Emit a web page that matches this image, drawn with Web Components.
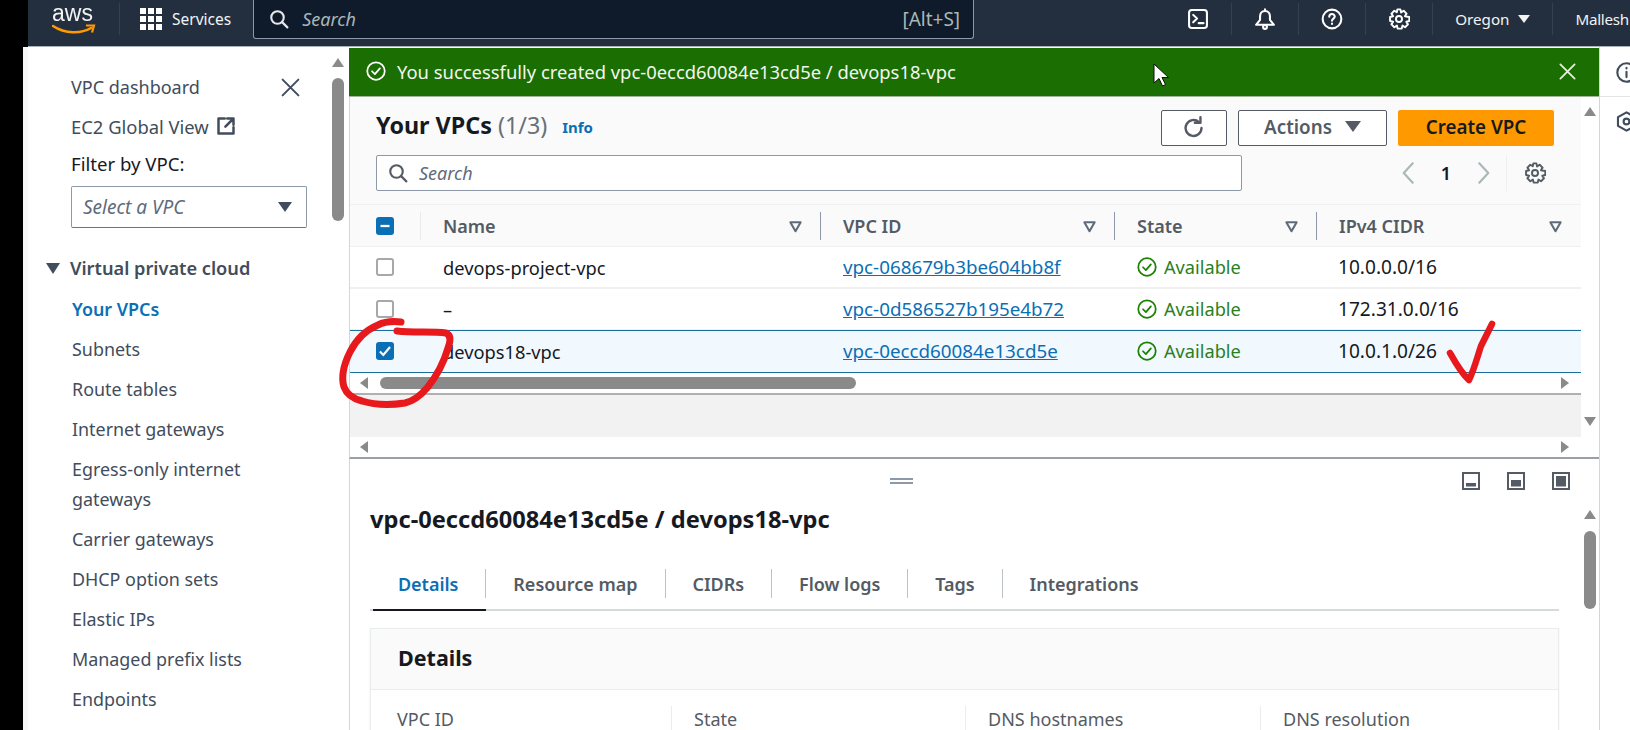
<!DOCTYPE html>
<html lang="en">
<head>
<meta charset="utf-8">
<title>Your VPCs</title>
<style>
  html, body { margin: 0; height: 730px; overflow: hidden; background: #000; }
  body { font-family: "Noto Sans", "Open Sans", sans-serif; font-size: 18px; color: #16191f; }
</style>
</head>
<body>
<app-shell>
  <aws-topbar slot="top"></aws-topbar>
  <vpc-sidebar slot="nav">
    <nav-link>Your VPCs</nav-link>
    <nav-link>Subnets</nav-link>
    <nav-link>Route tables</nav-link>
    <nav-link>Internet gateways</nav-link>
    <nav-link>Egress-only internet gateways</nav-link>
    <nav-link>Carrier gateways</nav-link>
    <nav-link>DHCP option sets</nav-link>
    <nav-link>Elastic IPs</nav-link>
    <nav-link>Managed prefix lists</nav-link>
    <nav-link>Endpoints</nav-link>
  </vpc-sidebar>
  <flash-banner slot="main">You successfully created vpc-0eccd60084e13cd5e / devops18-vpc</flash-banner>
  <vpc-pane slot="main">
    <vpc-row name="devops-project-vpc" vpc="vpc-068679b3be604bb8f" cidr="10.0.0.0/16"></vpc-row>
    <vpc-row name="–" vpc="vpc-0d586527b195e4b72" cidr="172.31.0.0/16"></vpc-row>
    <vpc-row name="devops18-vpc" vpc="vpc-0eccd60084e13cd5e" cidr="10.0.1.0/26" selected></vpc-row>
  </vpc-pane>
  <details-pane slot="main"></details-pane>
  <help-rail slot="rail"></help-rail>
</app-shell>
<ink-marks></ink-marks>

<script>
// Shared icon markup, everything on a 16 unit grid
const GEAR = `<path d="M6.8 1 6.4 3.1 4.6 2 2.5 4.1 3.7 6 1.5 6.5v3l2.2.5-1.2 1.9L4.6 14l1.9-1.2.5 2.2h3l.5-2.2 1.9 1.2 2.1-2.1-1.2-1.9 2.2-.5v-3L12.3 6l1.2-1.9L11.4 2 9.5 3.2 9 1z"/><circle cx="8" cy="8" r="2.2"/>`;
const SEARCH = `<circle cx="6.8" cy="6.8" r="5"/><path d="m10.5 10.5 4.2 4.2"/>`;
const CHECK_CIRCLE = `<circle cx="8" cy="8" r="7"/><path d="m4.8 8.2 2.3 2.3 4-4.6"/>`;
const COLUMNS = "71px 400px 294px 202px 264px";
const icon = (body, size, color, width = 2) =>
  `<svg width="${size}" height="${size}" viewBox="0 0 16 16" fill="none" stroke="${color}" stroke-width="${width}" stroke-linejoin="round" stroke-linecap="round" aria-hidden="true">${body}</svg>`;

class AppShell extends HTMLElement {
  constructor() {
    super();
    this.attachShadow({ mode: "open" }).innerHTML = `
      <style>
        :host { display: grid; grid-template-columns: 326px 1251px 30px; grid-template-rows: 47px 683px; width: 1607px; margin-left: 23px; filter: blur(.3px); }
        .top { grid-column: 1 / -1; padding-left: 5px; background: #000; }
        .main { display: flex; flex-direction: column; padding-top: 1px; background: #fff; border-right: 1px solid #d5d5d5; box-sizing: border-box; overflow: hidden; }
      </style>
      <div class="top"><slot name="top"></slot></div>
      <slot name="nav"></slot>
      <div class="main"><slot name="main"></slot></div>
      <slot name="rail"></slot>`;
  }
}

class AwsTopbar extends HTMLElement {
  constructor() {
    super();
    const divider = (x) => `<i class="div" style="margin-left:${x}px"></i>`;
    this.attachShadow({ mode: "open" }).innerHTML = `
      <style>
        :host { display: flex; align-items: center; height: 47px; padding-bottom: 8px; box-sizing: border-box; background: #232f3e; border-bottom: 1px solid #aab2b8; color: #f2f3f3; font-size: 15.2px; overflow: hidden; white-space: nowrap; }
        .logo { position: relative; align-self: flex-start; width: 50px; height: 38px; margin-left: 24px; flex: none; }
        .logo b { display: block; font-family: "Liberation Sans", sans-serif; font-weight: 400; font-size: 23px; line-height: 26px; }
        .logo svg { position: absolute; left: 0; top: 24px; }
        .div { flex: none; width: 1px; height: 32px; background: #35414f; }
        .grid { flex: none; display: grid; grid-template-columns: repeat(3, 6px); gap: 2px; margin-left: 20px; }
        .grid i { width: 6px; height: 6px; background: #fff; }
        .services { margin-left: 10px; font-size: 15.5px; }
        .search { flex: none; align-self: flex-start; display: flex; align-items: center; width: 721px; height: 40px; margin: -1px 0 0 22px; padding: 0 13px 0 15px; box-sizing: border-box; background: #0f1b2a; border: 1px solid #8d99a8; border-top: 0; border-radius: 0 0 3px 3px; color: #aab7b8; }
        .search em { margin-left: 13px; font-size: 18px; }
        .search span { margin-left: auto; font-size: 19px; }
        .tool { flex: none; display: flex; justify-content: center; width: 66px; }
        .caret { width: 0; height: 0; margin-left: 9px; border: 6px solid transparent; border-top: 8px solid #f2f3f3; border-bottom: 0; }
      </style>
      <div class="logo"><b>aws</b><svg width="44" height="11" viewBox="0 0 44 11" fill="none"><path d="M1 2c12 8 28 8 38 2" stroke="#f90" stroke-width="2.6" stroke-linecap="round"/><path d="M34 1.5h8l-2 7" stroke="#f90" stroke-width="2.2" fill="none"/></svg></div>
      ${divider(17)}
      <div class="grid">${"<i></i>".repeat(9)}</div>
      <span class="services">Services</span>
      <div class="search">${icon(SEARCH, 20, "#e6e8ea", 1.7)}<em>Search</em><span>[Alt+S]</span></div>
      <div style="flex:none;width:191px"></div>
      <div class="tool">${icon(`<rect x="1.5" y="1.5" width="13" height="13" rx="2"/><path d="m4.5 5 2.8 2.7-2.8 2.7M8.5 11H12"/>`, 22, "#fff", 1.5)}</div>
      ${divider(0)}
      <div class="tool">${icon(`<path d="M8 2.200c-2.500 0-3.600 2-3.600 4v2.400L1.500 12.200h13L11.600 8.600V6.200c0-2-1.100-4-3.600-4zM8 1v1.200"/><circle cx="8" cy="13.800" r="1.400"/>`, 22, "#fff", 1.5)}</div>
      ${divider(0)}
      <div class="tool">${icon(`<circle cx="8" cy="8" r="6.800"/><path d="M6 6.300c0-1.200 1-2 2-2s2 .8 2 1.900c0 1.500-2 1.600-2 3.100M8 11.300v.4"/>`, 22, "#fff", 1.5)}</div>
      ${divider(0)}
      <div class="tool">${icon(GEAR, 22, "#fff", 1.4)}</div>
      ${divider(0)}
      <span style="margin-left:22px">Oregon</span><i class="caret"></i>
      ${divider(22)}
      <span style="margin-left:22px;letter-spacing:-.3px">Mallesh</span>`;
  }
}

class VpcSidebar extends HTMLElement {
  constructor() {
    super();
    this.attachShadow({ mode: "open" }).innerHTML = `
      <style>
        :host { display: flex; background: #fff; border-left: 5px solid #f8f8f8; box-sizing: border-box; color: #414d5c; height: 683px; overflow: hidden; }
        .body { flex: none; width: 304px; padding: 25px 0 0 43px; box-sizing: border-box; }
        .row { display: flex; align-items: center; height: 30px; margin-bottom: 9px; white-space: nowrap; }
        .close { margin-left: auto; margin-right: 31px; display: flex; }
        .label { height: 28px; margin: -1px 0 9px; color: #16191f; font-size: 18.6px; }
        .select { display: flex; align-items: center; justify-content: space-between; width: 236px; height: 42px; padding: 0 14px 0 11px; box-sizing: border-box; border: 1px solid #8d99a8; border-bottom-color: #6b7480; border-radius: 2px; color: #5f6b7a; margin-bottom: 25px; }
        .select em { font-size: 19px; }
        .select i { width: 0; height: 0; border: 7px solid transparent; border-top: 10px solid #414d5c; border-bottom: 0; }
        .group { display: flex; align-items: center; height: 30px; margin: 0 0 11px -25px; font-weight: 600; white-space: nowrap; font-size: 18.2px; }
        .group i { width: 0; height: 0; margin-right: 10px; border: 7px solid transparent; border-top: 11px solid #414d5c; border-bottom: 0; }
        .bar { flex: none; width: 12px; display: flex; flex-direction: column; align-items: center; padding-top: 11px; }
        .bar i { width: 0; height: 0; border: 6px solid transparent; border-bottom: 9px solid #8a8a8a; border-top: 0; }
        .bar b { display: block; width: 12px; height: 143px; margin-top: 11px; border-radius: 6px; background: #8a8a8a; }
      </style>
      <div class="body">
        <div class="row">VPC dashboard<span class="close">${icon(`<path d="m2 2 12 12M14 2 2 14"/>`, 21, "#414d5c", 1.5)}</span></div>
        <div class="row"><span style="font-size:18.4px">EC2 Global View</span><span style="display:flex;margin-left:7px">${icon(`<path d="M7 2H2v12h12V9M9 2h5v5M14 2 7.500 8.500"/>`, 20, "#414d5c", 2)}</span></div>
        <div class="row label">Filter by VPC:</div>
        <div class="select"><em>Select a VPC</em><i></i></div>
        <div class="group"><i></i>Virtual private cloud</div>
        <slot></slot>
      </div>
      <div class="bar"><i></i><b></b></div>`;
  }
}

class NavLink extends HTMLElement {
  constructor() {
    super();
    this.attachShadow({ mode: "open" }).innerHTML = `
      <style>
        :host { display: block; width: 230px; line-height: 30px; margin: 0 0 10px 1px; color: #414d5c; font-size: 17.9px; }
        :host(:first-child) { color: #0b6fb5; font-weight: 600; }
      </style>
      <slot></slot>`;
  }
}

class FlashBanner extends HTMLElement {
  constructor() {
    super();
    this.attachShadow({ mode: "open" }).innerHTML = `
      <style>
        :host { display: flex; flex: none; align-items: center; height: 49px; background: #1b6e01; color: #f2f6ef; padding: 0 22px 2px 17px; box-sizing: border-box; border-bottom: 1px solid #9fb796; font-size: 18.4px; white-space: nowrap; }
        span { margin-left: 11px; }
        .x { margin-left: auto; display: flex; }
      </style>
      ${icon(CHECK_CIRCLE, 20, "#fff", 1.4)}
      <span><slot></slot></span>
      <div class="x">${icon(`<path d="m2 2 12 12M14 2 2 14"/>`, 19, "#e4efe0", 1.5)}</div>`;
  }
}

class VpcCheck extends HTMLElement {
  constructor() {
    super();
    const state = this.getAttribute("state");
    const mark = state === "checked" ? `<path d="m3.500 8.500 3 3 6-7" stroke="#fff" stroke-width="2" fill="none"/>`
      : state === "mixed" ? `<path d="M4 8h8" stroke="#fff" stroke-width="2"/>` : "";
    this.attachShadow({ mode: "open" }).innerHTML = `
      <style>
        :host { display: block; width: 18px; height: 18px; box-sizing: border-box; border-radius: 3px; background: ${state ? "#0b6fb5" : "#fff"}; border: ${state ? 0 : "2px solid #a8a8a8"}; }
        svg { display: block; }
      </style>
      ${state ? `<svg width="18" height="18" viewBox="0 0 16 16">${mark}</svg>` : ""}`;
  }
}

class VpcRow extends HTMLElement {
  constructor() {
    super();
    const name = this.getAttribute("name");
    const vpc = this.getAttribute("vpc");
    const cidr = this.getAttribute("cidr");
    const selected = this.hasAttribute("selected");
    this.attachShadow({ mode: "open" }).innerHTML = `
      <style>
        :host { display: grid; grid-template-columns: ${COLUMNS}; align-items: center; height: 42px; box-sizing: border-box; border-bottom: 2px solid #f0f0f0; background: #fff; white-space: nowrap; }
        :host([selected]) { background: #f1f8fe; border-top: 1px solid #1a6f9e; border-bottom: 1px solid #1a6f9e; margin-top: -1px; height: 43px; padding-bottom: 1px; }
        .c { padding-left: 22px; }
        .box { padding-left: 26px; }
        .name { font-size: 18.3px; }
        a { color: #0b6fb5; text-decoration: underline; font-size: 18.8px; }
        .ok { display: flex; align-items: center; gap: 7px; color: #2a7f1e; font-size: 18.2px; }
        .cidr { font-size: 19.1px; padding-left: 21px; }
      </style>
      <div class="c box"><vpc-check ${selected ? 'state="checked"' : ""}></vpc-check></div>
      <div class="c name">${name}</div>
      <div class="c"><a>${vpc}</a></div>
      <div class="c ok">${icon(CHECK_CIRCLE, 20, "#1d8102", 1.4)}Available</div>
      <div class="c cidr">${cidr}</div>`;
  }
}

class VpcPane extends HTMLElement {
  constructor() {
    super();
    const col = (label, line) => `
      <div class="th ${line ? "line" : ""}"><span>${label}</span>${icon(`<path d="M2.500 3.500h11L8 13z"/>`, 15, "#5f6b7a", 2.2)}</div>`;
    const hbar = (thumb) => `
      <div class="hbar"><i class="l"></i>${thumb ? '<b></b>' : ""}<i class="r"></i></div>`;
    this.attachShadow({ mode: "open" }).innerHTML = `
      <style>
        :host { display: flex; flex: none; height: 362px; box-sizing: border-box; border-left: 1px solid #d5d5d5; border-bottom: 2px solid #9aa0a6; }
        .content { flex: none; width: 1231px; }
        .head { height: 108px; padding: 13px 27px 0 26px; box-sizing: border-box; background: #fafafa; border-bottom: 1px solid #f0f0f0; }
        .title { display: flex; align-items: center; height: 36px; }
        h1 { margin: -6px 0 0; font-size: 23.300px; font-weight: 700; }
        h1 span { font-weight: 400; color: #687078; }
        .info { margin: -2px 0 0 15px; font-size: 15px; font-weight: 700; color: #0b6fb5; }
        .btn { display: flex; align-items: center; justify-content: center; height: 36px; box-sizing: border-box; border: 1px solid #545b64; border-radius: 2px; background: #fff; color: #545b64; font-weight: 600; font-size: 18.800px; padding-bottom: 3px; }
        .refresh { width: 66px; margin-left: auto; padding: 0; }
        .actions { width: 149px; margin-left: 11px; gap: 13px; }
        .actions i { width: 0; height: 0; border: 8px solid transparent; border-top: 11px solid #545b64; border-bottom: 0; }
        .create { width: 156px; margin-left: 11px; background: #ff9900; border-color: #ff9900; color: #16191f; }
        .tools { display: flex; align-items: center; height: 36px; margin-top: 9px; }
        .search { flex: none; display: flex; align-items: center; width: 866px; height: 36px; box-sizing: border-box; padding-left: 11px; border: 1px solid #8d99a8; border-radius: 2px; background: #fff; color: #5f6b7a; }
        .search em { margin-left: 11px; }
        .pager { display: flex; align-items: center; margin-left: auto; }
        .pager b { width: 50px; margin: 0; text-align: center; font-weight: 600; }
        .th { display: flex; align-items: center; justify-content: space-between; height: 42px; padding: 0 18px 0 22px; box-sizing: border-box; font-weight: 600; color: #545b64; position: relative; white-space: nowrap; }
        .line::after { content: ""; position: absolute; right: 0; top: 7px; bottom: 7px; width: 1px; background: #8d99a8; }
        .thead { display: grid; grid-template-columns: ${COLUMNS}; background: #fafafa; border-bottom: 1px solid #f0f0f0; box-sizing: border-box; height: 42px; }
        .thead .chk { display: flex; align-items: center; padding-left: 26px; position: relative; }
        .thead .chk::after { content: ""; position: absolute; right: 0; top: 7px; bottom: 7px; width: 1px; background: #eaeaea; }
        .hbar { display: flex; align-items: center; height: 20px; background: #fff; position: relative; }
        .hbar i { width: 0; height: 0; border: 6px solid transparent; }
        .hbar .l { margin-left: 10px; border-right: 8px solid #8a8a8a; border-left: 0; }
        .hbar .r { margin-left: auto; margin-right: 12px; border-left: 8px solid #8a8a8a; border-right: 0; }
        .hbar b { width: 476px; height: 12px; margin-left: 12px; border-radius: 6px; background: #8a8a8a; }
        .rule { height: 2px; background: #b0b0b0; }
        .fill { height: 42px; background: #f2f2f2; }
        .vbar { flex: 1; display: flex; flex-direction: column; align-items: center; justify-content: space-between; padding: 10px 0 31px; box-sizing: border-box; background: #fff; }
        .vbar i { width: 0; height: 0; border: 6px solid transparent; }
        .up { border-bottom: 9px solid #8a8a8a !important; border-top: 0 !important; }
        .down { border-top: 9px solid #8a8a8a !important; border-bottom: 0 !important; }
      </style>
      <div class="content">
        <div class="head">
          <div class="title">
            <h1>Your VPCs <span>(1/3)</span></h1><span class="info">Info</span>
            <div class="btn refresh">${icon(`<path d="M13 8a5.300 5.300 0 1 1-1.700-3.900"/><path d="M12.300 .8v3.700H8.600"/>`, 24, "#545b64", 1.600)}</div>
            <div class="btn actions">Actions<i></i></div>
            <div class="btn create">Create VPC</div>
          </div>
          <div class="tools">
            <div class="search">${icon(SEARCH, 20, "#545b64", 1.700)}<em>Search</em></div>
            <div class="pager">
              ${icon(`<path d="M10.500 1.500 4.500 8l6 6.500"/>`, 24, "#aab7b8", 1.400)}
              <b>1</b>
              ${icon(`<path d="m5.500 1.500 6 6.500-6 6.500"/>`, 24, "#aab7b8", 1.400)}
              <i style="width:1px;height:36px;background:#f0f0f0;margin:0 17px 0 11px"></i>
              ${icon(GEAR, 22, "#545b64", 1.400)}
              <i style="width:8px"></i>
            </div>
          </div>
        </div>
        <div class="thead">
          <div class="chk"><vpc-check state="mixed"></vpc-check></div>
          ${col("Name", true)}${col("VPC ID", true)}${col("State", true)}${col("IPv4 CIDR", false)}
        </div>
        <slot></slot>
        ${hbar(true)}
        <div class="rule"></div>
        <div class="fill"></div>
        ${hbar(false)}
      </div>
      <div class="vbar"><i class="up"></i><i class="down"></i></div>`;
  }
}

class DetailsPane extends HTMLElement {
  constructor() {
    super();
    const tabs = ["Details", "Resource map", "CIDRs", "Flow logs", "Tags", "Integrations"];
    const size = (body) => `<svg width="18" height="18" viewBox="0 0 18 18"><rect x="1" y="1" width="16" height="16" fill="none" stroke="#545b64" stroke-width="2"/>${body}</svg>`;
    this.attachShadow({ mode: "open" }).innerHTML = `
      <style>
        :host { display: flex; flex: 1; min-height: 0; border-left: 1px solid #d5d5d5; overflow: hidden; }
        .content { flex: none; width: 1189px; margin-left: 20px; }
        .top { display: flex; align-items: center; height: 42px; margin-right: -11px; }
        .handle { width: 23px; height: 6px; margin: 2px 0 0 520px; box-sizing: border-box; border-top: 2px solid #8d99a8; border-bottom: 2px solid #8d99a8; }
        .sizes { display: flex; gap: 27px; margin: 2px 0 0 auto; }
        h2 { margin: 0; font-size: 23.650px; line-height: 36px; font-weight: 700; white-space: nowrap; }
        .tabs { display: flex; height: 48px; margin-top: 24px; padding-left: 1px; border-bottom: 2px solid #d5dbdb; }
        .tab { display: flex; align-items: center; height: 29px; margin-top: 8px; padding: 0 26.900px; box-sizing: border-box; font-weight: 600; color: #545b64; border-right: 1px solid #bcc2c6; position: relative; white-space: nowrap; font-size: 18px; }
        .tab:last-child { border: 0; }
        .tab.on { color: #0b6fb5; }
        .tab.on::after { content: ""; position: absolute; left: 2px; right: -1px; bottom: -13px; height: 2px; background: #16191f; }
        .card { margin-top: 17px; border: 1px solid #eaeded; box-shadow: 0 1px 2px rgba(0, 0, 0, .08); }
        .card h3 { margin: 0; height: 61px; padding-left: 27px; font-size: 21.500px; line-height: 57px; background: #fafafa; border-bottom: 1px solid #eaeded; box-sizing: border-box; }
        .cols { display: grid; grid-template-columns: 300px 294px 295px 1fr; padding-top: 16px; }
        .cols div { height: 24px; line-height: 26px; color: #545b64; padding-left: 22px; border-left: 1px solid #eaeded; white-space: nowrap; }
        .cols div:first-child { border: 0; padding-left: 26px; }
        .vbar { flex: 1; display: flex; flex-direction: column; align-items: center; padding-top: 51px; margin-left: 25px; margin-right: 3px; }
        .vbar i { width: 0; height: 0; border: 6px solid transparent; border-bottom: 9px solid #8a8a8a; border-top: 0; }
        .vbar b { display: block; width: 12px; height: 78px; margin-top: 12px; border-radius: 6px; background: #8a8a8a; }
      </style>
      <div class="content">
        <div class="top">
          <i class="handle"></i>
          <div class="sizes">
            ${size(`<rect x="4" y="11" width="10" height="3.500" fill="#545b64"/>`)}
            ${size(`<rect x="4" y="8" width="10" height="6.500" fill="#545b64"/>`)}
            ${size(`<rect x="4" y="4" width="10" height="10.500" fill="#545b64"/>`)}
          </div>
        </div>
        <h2>vpc-0eccd60084e13cd5e / devops18-vpc</h2>
        <div class="tabs">${tabs.map((t, i) => `<div class="tab ${i === 0 ? "on" : ""}">${t}</div>`).join("")}</div>
        <div class="card">
          <h3>Details</h3>
          <div class="cols"><div>VPC ID</div><div>State</div><div>DNS hostnames</div><div>DNS resolution</div></div>
        </div>
      </div>
      <div class="vbar"><i></i><b></b></div>`;
  }
}

class HelpRail extends HTMLElement {
  constructor() {
    super();
    this.attachShadow({ mode: "open" }).innerHTML = `
      <style>
        :host { display: block; background: #fff; overflow: hidden; padding-top: 1px; }
        .cell { height: 49px; display: flex; align-items: center; padding-left: 16px; box-sizing: border-box; border-bottom: 1px solid #e4e4e4; }
        .cell + .cell { border: 0; }
        svg { flex: none; }
      </style>
      <div class="cell">${icon(`<circle cx="8" cy="8" r="7"/><path d="M8 7.500v4M8 4.500v.4"/>`, 21, "#414d5c", 1.600)}</div>
      <div class="cell">${icon(`<path d="M8 1 14.500 4.700v6.600L8 15 1.500 11.300V4.700z"/><circle cx="8" cy="8" r="2.200"/>`, 21, "#414d5c", 1.600)}</div>`;
  }
}

// Hand drawn marker strokes and the mouse pointer lying over the screenshot
class InkMarks extends HTMLElement {
  constructor() {
    super();
    this.attachShadow({ mode: "open" }).innerHTML = `
      <style>
        :host { display: block; position: absolute; inset: 0; pointer-events: none; }
        svg { display: block; }
      </style>
      <svg width="1630" height="730" viewBox="0 0 1630 730" fill="none">
        <path d="M401 322 C392 321 384 322 378 325 C366 330 356 340 350 352 C344 364 341 377 344 387 C347 395 354 399 362 401 C375 405 392 405 405 403 C414 401 421 395 427 388 C436 377 444 362 448 348 C451 340 451 335 446 333 C432 331 414 333 397 331" stroke="#e8191c" stroke-width="7" stroke-linecap="round" stroke-linejoin="round"/>
        <path d="M1450 353 C1455 362 1461 373 1469 380 C1474 370 1477 358 1481 346 C1485 338 1489 330 1492 324" stroke="#e8191c" stroke-width="6.500" stroke-linecap="round" stroke-linejoin="round"/>
        <path d="M1154 64v19l5-4.500 3.500 7.500 3-1.500-3.500-7h6.500z" fill="#fff" stroke="#111" stroke-width="1"/>
      </svg>`;
  }
}

customElements.define("vpc-check", VpcCheck);
customElements.define("app-shell", AppShell);
customElements.define("aws-topbar", AwsTopbar);
customElements.define("vpc-sidebar", VpcSidebar);
customElements.define("nav-link", NavLink);
customElements.define("flash-banner", FlashBanner);
customElements.define("vpc-row", VpcRow);
customElements.define("vpc-pane", VpcPane);
customElements.define("details-pane", DetailsPane);
customElements.define("help-rail", HelpRail);
customElements.define("ink-marks", InkMarks);
</script>
</body>
</html>
